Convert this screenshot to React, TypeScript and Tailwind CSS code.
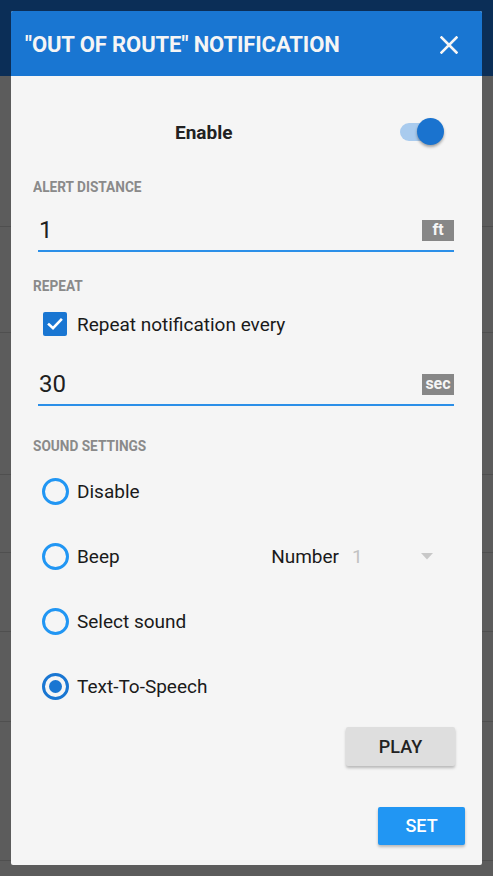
import React from "react";

const rows = [151, 106, 142, 78, 79, 90, 139];

function Label({ children }: { children: React.ReactNode }) {
  return (
    <div className="h-[20px] flex items-center pl-[22px]">
      <span className="inline-block origin-left scale-x-[0.91] text-[15px] font-bold text-[#8a8a8a] leading-none whitespace-nowrap">
        {children}
      </span>
    </div>
  );
}

function Field({ value, unit }: { value: string; unit: string }) {
  return (
    <div className="ml-[27px] mr-[28px] h-[42px] flex items-center justify-between border-b-2 border-[#2b8fe8]">
      <span className="text-[24px] text-[#202020] leading-none pl-[1px]">{value}</span>
      <span className="h-[21px] w-[32px] flex items-center justify-center bg-[#878787] text-[#f5f5f5] font-bold text-[16px] leading-none">
        {unit}
      </span>
    </div>
  );
}

function Radio({ label, checked, extra }: { label: string; checked?: boolean; extra?: React.ReactNode }) {
  return (
    <div className="h-[65px] flex items-center pl-[31px] pr-[49px]">
      <div
        className={
          "w-[27px] h-[27px] rounded-full border-[3px] flex items-center justify-center shrink-0 " +
          (checked ? "border-[#1976d2]" : "border-[#2196f3]")
        }
      >
        {checked && <div className="w-[13px] h-[13px] rounded-full bg-[#1976d2]" />}
      </div>
      <span className="ml-[8px] text-[19px] text-[#1a1a1a] leading-none">{label}</span>
      {extra}
    </div>
  );
}

export default function App() {
  return (
    <div
      className="relative w-[493px] h-[876px] overflow-hidden bg-[#5c5c5c]"
      style={{ fontFamily: "Roboto, 'Noto Sans', sans-serif" }}
    >
      {/* dimmed background screen */}
      <div className="h-[76px] bg-[#0b2e57]" />
      {rows.map((h, i) => (
        <div key={i} className="border-b border-[#4f4f4f]" style={{ height: h }} />
      ))}

      {/* dialog */}
      <div className="absolute left-[11px] top-[11px] w-[471px] h-[854px] bg-[#f5f5f5] rounded-[2px] overflow-hidden flex flex-col">
        <div className="h-[65px] shrink-0 bg-[#1976d2] flex items-center justify-between pl-[14px] pr-[24px]">
          <span className="text-[22px] font-bold text-[#f5f5f5] leading-none tracking-[-0.1px] pt-[2px]">
            "OUT OF ROUTE" NOTIFICATION
          </span>
          <svg width="18" height="18" viewBox="0 0 18 18" className="mt-[3px]">
            <path d="M1.5 1.5 L16.5 16.5 M16.5 1.5 L1.5 16.5" stroke="#f5f5f5" strokeWidth="2.6" strokeLinecap="square" />
          </svg>
        </div>

        {/* Enable */}
        <div className="mt-[36px] h-[40px] flex items-center relative">
          <span className="absolute left-[164px] top-[11px] text-[19px] font-bold text-[#222] leading-none">Enable</span>
          <div className="absolute left-[389px] top-[11px] w-[34px] h-[18px] rounded-full bg-[#a9cbee]" />
          <div className="absolute left-[406px] top-[6px] w-[27px] h-[27px] rounded-full bg-[#1a73cf] shadow-[0_2px_3px_rgba(0,0,0,0.35)]" />
        </div>

        <div className="mt-[25px]">
          <Label>ALERT DISTANCE</Label>
        </div>
        <div className="mt-[13px]">
          <Field value="1" unit="ft" />
        </div>

        <div className="mt-[24px]">
          <Label>REPEAT</Label>
        </div>
        <div className="mt-[8px] h-[40px] flex items-center pl-[32px]">
          <div className="w-[24px] h-[24px] rounded-[2px] bg-[#1976d2] flex items-center justify-center">
            <svg width="18" height="18" viewBox="0 0 18 18">
              <path d="M3 9.5 L7 13.2 L15 4.8" fill="none" stroke="#fff" strokeWidth="2.6" strokeLinecap="square" />
            </svg>
          </div>
          <span className="ml-[10px] pt-[1px] text-[19px] text-[#1a1a1a] leading-none">Repeat notification every</span>
        </div>

        <div className="mt-[20px]">
          <Field value="30" unit="sec" />
        </div>

        <div className="mt-[30px]">
          <Label>SOUND SETTINGS</Label>
        </div>

        <div className="mt-[3px]">
          <Radio label="Disable" />
          <Radio
            label="Beep"
            extra={
              <div className="ml-auto flex items-center">
                <span className="text-[19px] text-[#1a1a1a] leading-none">Number</span>
                <span className="ml-[13px] text-[19px] text-[#c2c2c2] leading-none w-[69px]">1</span>
                <svg width="12" height="7" viewBox="0 0 12 7">
                  <path d="M0 0 L12 0 L6 6.5 Z" fill="#c8c8c8" />
                </svg>
              </div>
            }
          />
          <Radio label="Select sound" />
          <Radio label="Text-To-Speech" checked />
        </div>

        <div className="mt-[8px] flex justify-end pr-[27px]">
          <div className="w-[109px] h-[39px] rounded-[2px] bg-[#dedede] shadow-[0_2px_3px_rgba(0,0,0,0.25)] flex items-center justify-center text-[18px] font-medium text-[#222] leading-none">
            PLAY
          </div>
        </div>

        <div className="mt-[41px] flex justify-end pr-[17px]">
          <div className="w-[87px] h-[38px] rounded-[2px] bg-[#2196f3] shadow-[0_2px_3px_rgba(0,0,0,0.25)] flex items-center justify-center text-[18px] font-medium text-white leading-none">
            SET
          </div>
        </div>
      </div>
    </div>
  );
}
